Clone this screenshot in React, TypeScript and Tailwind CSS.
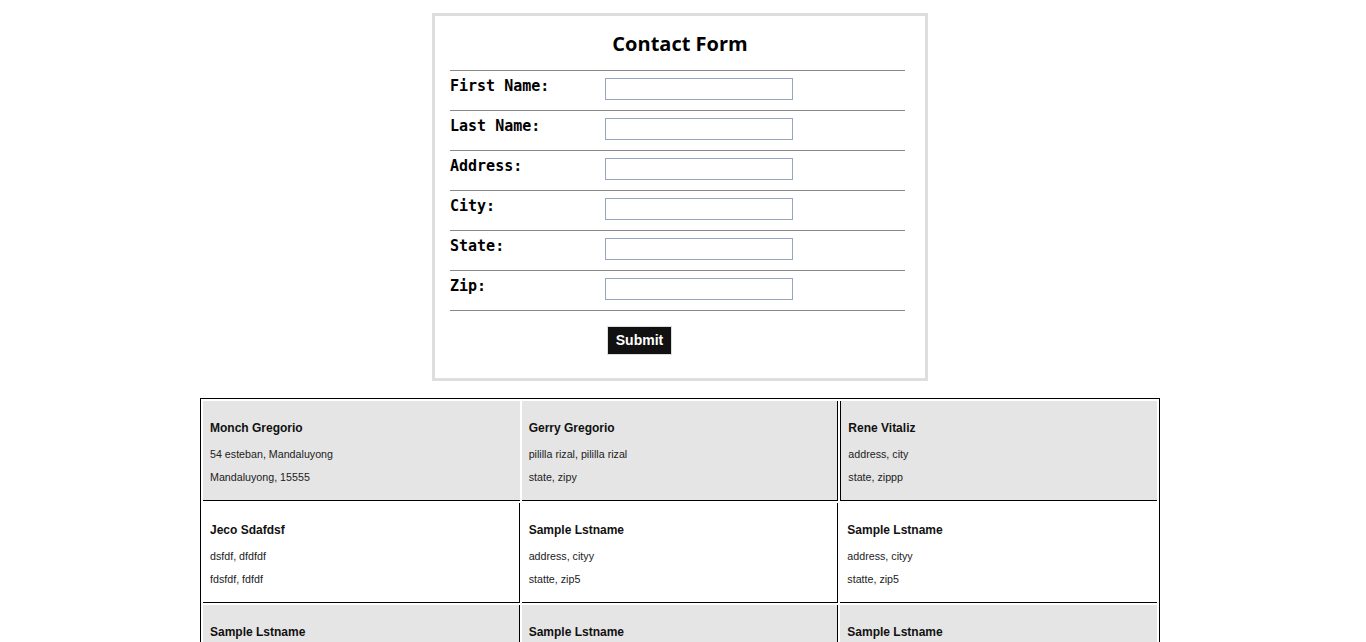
const fields = ["First Name:", "Last Name:", "Address:", "City:", "State:", "Zip:"];

type Contact = { name: string; line1: string; line2: string };

const contacts: Contact[] = [
  { name: "Monch Gregorio", line1: "54 esteban, Mandaluyong", line2: "Mandaluyong, 15555" },
  { name: "Gerry Gregorio", line1: "pililla rizal, pililla rizal", line2: "state, zipy" },
  { name: "Rene Vitaliz", line1: "address, city", line2: "state, zippp" },
  { name: "Jeco Sdafdsf", line1: "dsfdf, dfdfdf", line2: "fdsfdf, fdfdf" },
  { name: "Sample Lstname", line1: "address, cityy", line2: "statte, zip5" },
  { name: "Sample Lstname", line1: "address, cityy", line2: "statte, zip5" },
  { name: "Sample Lstname", line1: "address, cityy", line2: "statte, zip5" },
  { name: "Sample Lstname", line1: "address, cityy", line2: "statte, zip5" },
  { name: "Sample Lstname", line1: "address, cityy", line2: "statte, zip5" },
];

function ContactForm() {
  return (
    <div className="w-[496px] border-[3px] border-[#dedede] bg-white pl-[15px] pr-[20px] pt-[16px] pb-[23px]">
      <h2 className="pl-[5px] text-center text-[20px] font-bold leading-[24px] pb-[14px] text-black font-['Open_Sans',sans-serif]">
        Contact Form
      </h2>
      <div className="border-t border-[#888]">
        {fields.map((f) => (
          <div key={f} className="flex h-[40px] border-b border-[#888]">
            <label className="w-[155px] pt-[6px] text-[15px] font-bold leading-[18px] font-['DejaVu_Sans_Mono',monospace] text-black">
              {f}
            </label>
            <input
              type="text"
              className="mt-[7px] h-[22px] w-[188px] border border-[#98a6c4] bg-white outline-none"
            />
          </div>
        ))}
      </div>
      <div className="flex pt-[15px] pl-[157px]">
        <button className="h-[29px] w-[65px] border border-[#ddd] bg-[#111] text-[14px] font-bold text-white font-['Liberation_Sans',Arial,sans-serif]">
          Submit
        </button>
      </div>
    </div>
  );
}

function Card({ c, i }: { c: Contact; i: number }) {
  const row = Math.floor(i / 3);
  const col = i % 3;
  const gray = row % 2 === 0;
  let sides = "";
  if (row === 0 && col === 1) sides = "border-r border-r-black";
  if (row === 0 && col === 2) sides = "border-l border-l-black";
  if (row > 0 && col < 2) sides = "border-r border-r-black";
  return (
    <div
      className={`h-[100px] border-b border-b-black pl-[7px] ${gray ? "bg-[#e5e5e5]" : "bg-white"} ${sides}`}
    >
      <div className="pt-[20px] text-[12px] font-bold leading-[14px] text-[#111]">{c.name}</div>
      <div className="mt-[13px] text-[10.7px] leading-[12px] text-[#222]">{c.line1}</div>
      <div className="mt-[11px] text-[10.7px] leading-[12px] text-[#222]">{c.line2}</div>
    </div>
  );
}

export default function App() {
  return (
    <div className="min-h-screen bg-white pr-[6px] pt-[13px] pb-[20px] font-['Liberation_Sans',Arial,sans-serif]">
      <div className="flex justify-center">
        <ContactForm />
      </div>
      <div className="mx-auto mt-[17px] w-[960px] border border-black p-[2px]">
        <div className="grid grid-cols-3 gap-[2px]">
          {contacts.map((c, i) => (
            <Card key={i} c={c} i={i} />
          ))}
        </div>
      </div>
    </div>
  );
}
